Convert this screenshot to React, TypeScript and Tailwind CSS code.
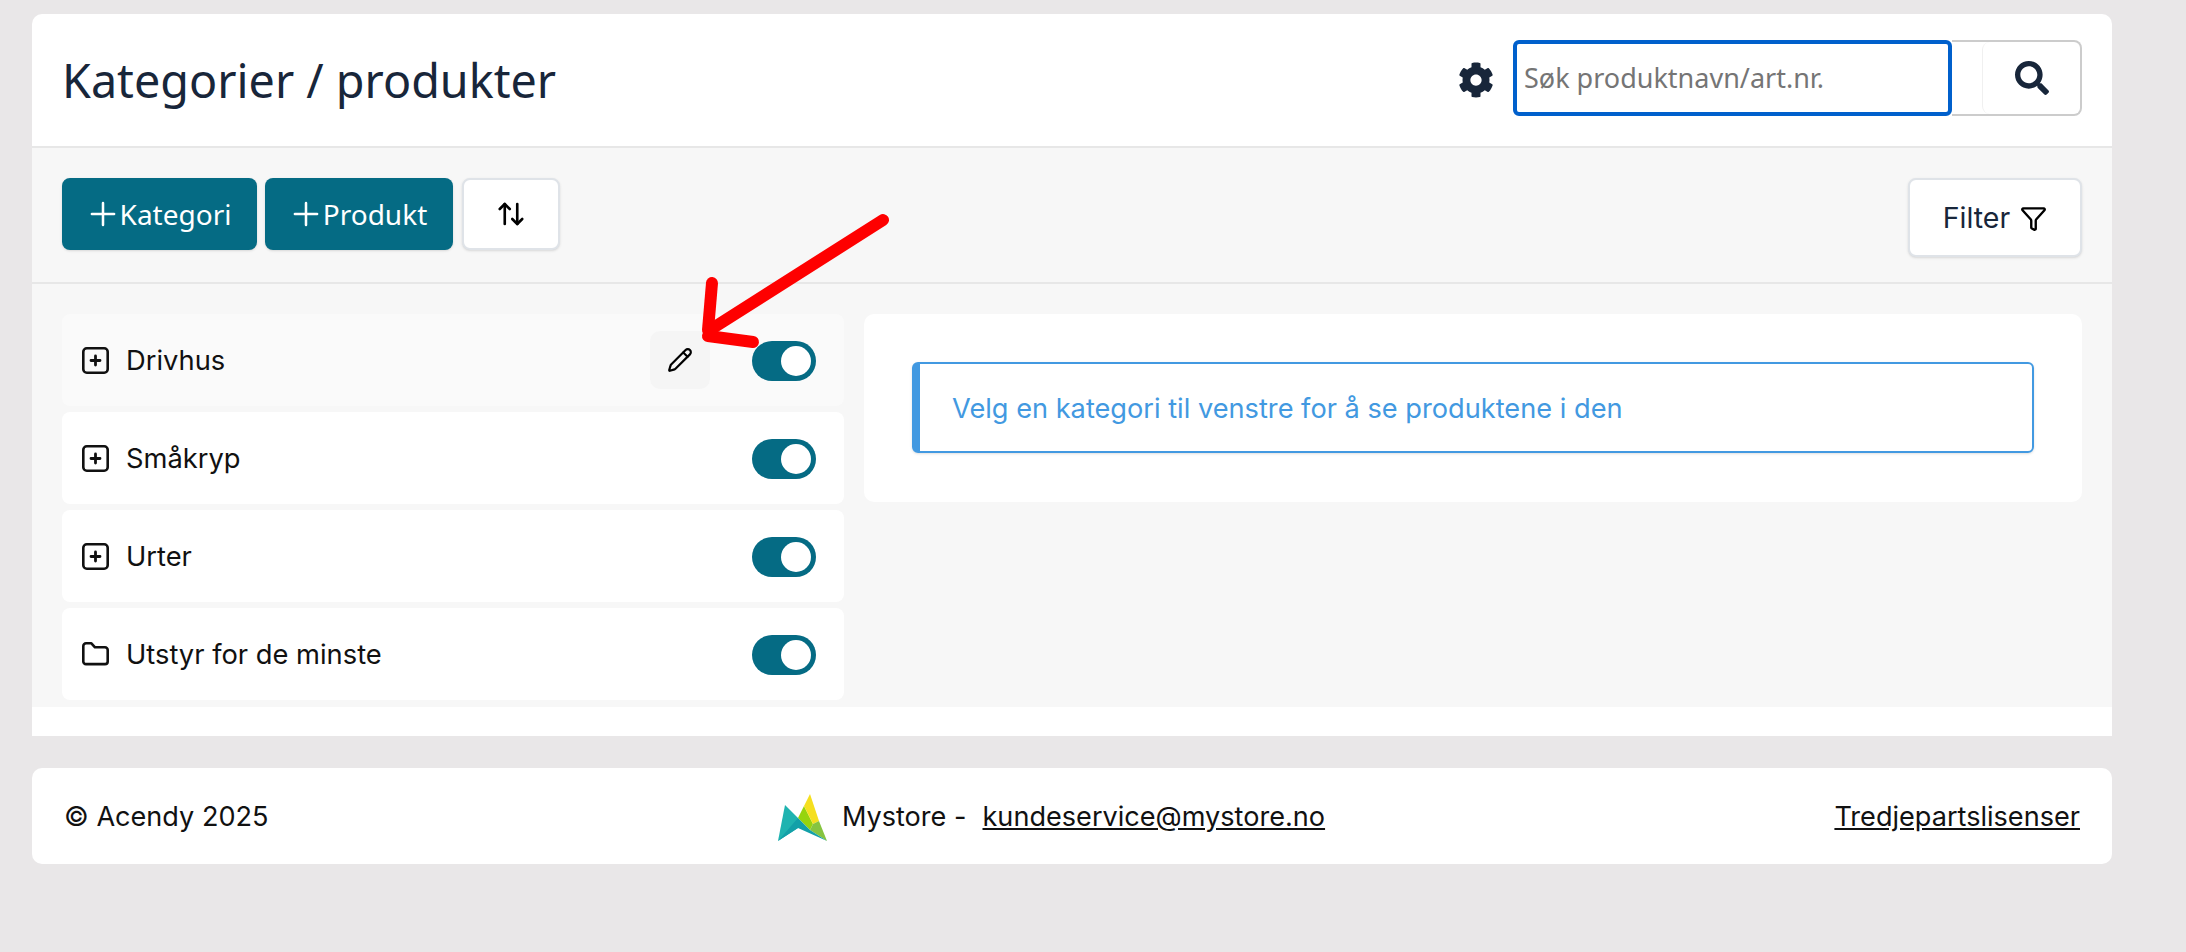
import { FaCog, FaSearch } from 'react-icons/fa';
import { ArrowUpDown, Funnel, Pencil, Plus } from 'lucide-react';

const CATEGORIES = [
  { name: 'Drivhus', kind: 'plus', active: true },
  { name: 'Småkryp', kind: 'plus' },
  { name: 'Urter', kind: 'plus' },
  { name: 'Utstyr for de minste', kind: 'folder' },
];

const UBUNTU_LIKE = 'font-["Noto_Sans",sans-serif]';

function PlusSquare() {
  return (
    <svg width="27" height="27" viewBox="0 0 27 27" fill="none" stroke="currentColor" strokeWidth="2.6">
      <rect x="1.3" y="1.3" width="24.4" height="24.4" rx="3.5" />
      <path d="M13.5 9v9M9 13.5h9" strokeLinecap="round" strokeWidth="2.8" />
    </svg>
  );
}

function FolderIcon() {
  return (
    <svg width="27" height="24" viewBox="0 0 27 24" fill="none" stroke="currentColor" strokeWidth="2.6" strokeLinejoin="round">
      <path d="M1.3 4a2.7 2.7 0 0 1 2.7-2.7h5.4l3.6 4h10a2.7 2.7 0 0 1 2.7 2.7v11.4a2.7 2.7 0 0 1-2.7 2.7H4a2.7 2.7 0 0 1-2.7-2.7z" />
    </svg>
  );
}

function Toggle() {
  return (
    <div className="mt-[1px] flex h-[40px] w-[64px] items-center justify-end rounded-full bg-[#056b84] pr-[5px]">
      <div className="h-[30px] w-[30px] rounded-full bg-white" />
    </div>
  );
}

function Logo() {
  return (
    <svg width="49" height="47" viewBox="0 0 49 47" className="shrink-0">
      <polygon points="0,47 7,11 20,24 20,34" fill="#1fb3b0" />
      <polygon points="20,24 26,12 35,30 32,36" fill="#97d40e" />
      <polygon points="32,0 41,27 35,30 26,12" fill="#f5df1f" />
      <polygon points="35,30 41,27 49,47 32,36" fill="#86c440" />
      <polygon points="0,47 20,24 32,36 49,47 20,34" fill="#13a0a8" />
    </svg>
  );
}

// red annotation drawn over the edit button
function Arrow() {
  return (
    <svg width="200" height="150" viewBox="0 0 200 150" className="pointer-events-none absolute left-[690px] top-[205px]">
      <g fill="none" stroke="#fe0000" strokeWidth="12" strokeLinecap="round">
        <path d="M193 15 L23 123" />
        <path d="M22 78 L18 125" />
        <path d="M18 131 L63 137" />
      </g>
    </svg>
  );
}

export default function App() {
  return (
    <div className="relative min-h-[952px] bg-[#e9e7e8] pb-[88px] pl-[32px] pt-[14px] font-['Inter',sans-serif] text-[#111]">
      <div className="w-[2080px] overflow-hidden rounded-t-[10px] bg-white pb-[29px]">
        {/* Header */}
        <div className="flex h-[134px] items-center justify-between border-b-2 border-[#e7e7e7] pl-[30px] pr-[30px]">
          <h1 className={`${UBUNTU_LIKE} text-[46.7px] text-[#18263a]`}>Kategorier / produkter</h1>
          <div className="flex items-center">
            <FaCog className="mr-[19px] text-[36px] text-[#18263a]" />
            <div className="mb-[4px] flex h-[76px] items-stretch">
              <div className={`${UBUNTU_LIKE} flex w-[439px] items-center rounded-[6px] border-[4px] border-[#0060cc] pl-[7px] text-[27px] text-[#757575]`}>
                Søk produktnavn/art.nr.
              </div>
              <div className="flex w-[130px] rounded-r-[8px] border-2 border-l-0 border-[#cccccc]">
                <div className="ml-[30px] flex flex-1 items-center justify-center rounded-l-[8px] border-l border-[#f0f0f0]">
                  <FaSearch className="text-[34px] text-[#18263a]" />
                </div>
              </div>
            </div>
          </div>
        </div>

        {/* Toolbar */}
        <div className="flex items-start justify-between border-b-2 border-[#e7e7e7] bg-[#f7f7f7] px-[30px] pb-[25px] pt-[30px]">
          <div className="flex gap-[8px]">
            <button className={`${UBUNTU_LIKE} flex h-[72px] w-[195px] items-center justify-center rounded-[8px] bg-[#056b84] pl-[4px] text-[28px] text-white shadow-sm`}>
              <Plus size={38} strokeWidth={1.6} className="-mx-[8px]" />
              <span className="ml-[6px]">Kategori</span>
            </button>
            <button className={`${UBUNTU_LIKE} flex h-[72px] w-[188px] items-center justify-center rounded-[8px] bg-[#056b84] pl-[4px] text-[28px] text-white shadow-sm`}>
              <Plus size={38} strokeWidth={1.6} className="-mx-[8px]" />
              <span className="ml-[6px]">Produkt</span>
            </button>
            <button className="ml-[1px] flex h-[72px] w-[98px] items-center justify-center rounded-[8px] border-2 border-[#dfe3e8] bg-white shadow-sm">
              <ArrowUpDown size={30} strokeWidth={2.1} className="text-black" />
            </button>
          </div>
          <button className="flex h-[79px] w-[174px] items-center justify-center gap-[10px] rounded-[8px] border-2 border-[#dfe3e8] bg-white pt-[2px] text-[28.5px] text-[#18263a] shadow-sm">
            Filter
            <Funnel size={27} strokeWidth={2.1} className="text-black" />
          </button>
        </div>

        {/* Content */}
        <div className="flex items-start gap-[20px] bg-[#f7f7f7] px-[30px] pb-[7px] pt-[30px]">
          <div className="flex w-[782px] flex-col gap-[6px]">
            {CATEGORIES.map((c) => (
              <div
                key={c.name}
                className={`flex h-[92px] items-center rounded-[8px] pl-[20px] pr-[28px] text-[27.3px] ${c.active ? 'bg-[#fafafa]' : 'bg-white'}`}
              >
                <span className="flex w-[27px] justify-center text-[#111]">
                  {c.kind === 'plus' ? <PlusSquare /> : <FolderIcon />}
                </span>
                <span className="ml-[17px] flex-1 pt-[2px]">{c.name}</span>
                {c.active && (
                  <span className="mr-[42px] flex h-[58px] w-[60px] items-center justify-center rounded-[10px] bg-[#f5f5f5]">
                    <Pencil size={26} strokeWidth={2} className="text-black" />
                  </span>
                )}
                <Toggle />
              </div>
            ))}
          </div>
          <div className="flex-1 rounded-[10px] bg-white px-[48px] pb-[49px] pt-[48px]">
            <div className="flex h-[91px] items-center rounded-[6px] border-2 border-l-8 border-[#4299e1] pl-[32px] pt-[3px] text-[27.2px] text-[#4299e1] shadow-sm">
              Velg en kategori til venstre for å se produktene i den
            </div>
          </div>
        </div>
      </div>

      {/* Footer */}
      <div className="mt-[32px] flex h-[96px] w-[2080px] items-center justify-between rounded-[10px] bg-white px-[32px] pt-[2px] text-[27.1px] text-[#111]">
        <span>© Acendy 2025</span>
        <div className="flex items-center">
          <Logo />
          <span className="ml-[15px]">Mystore -</span>
          <a className="ml-[16px] underline">kundeservice@mystore.no</a>
        </div>
        <a className="underline">Tredjepartslisenser</a>
      </div>

      <Arrow />
    </div>
  );
}
